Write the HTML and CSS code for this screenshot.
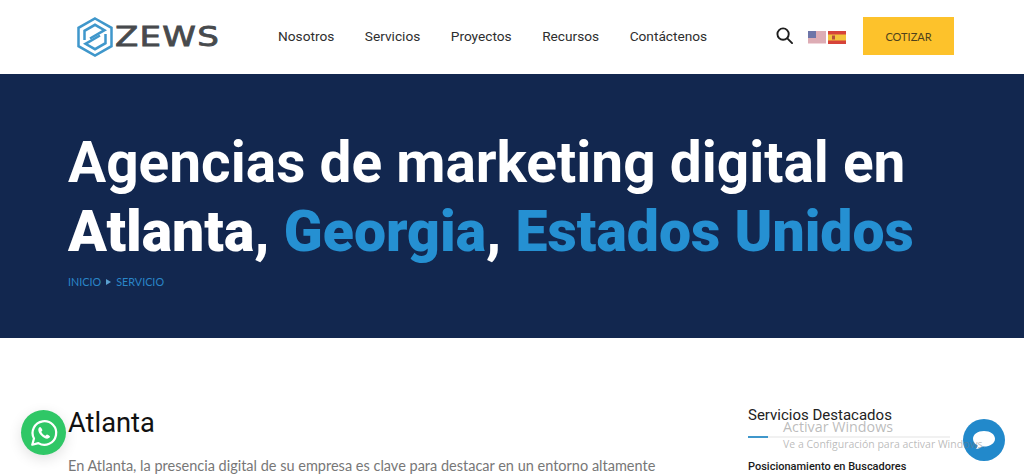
FILE: index.html
```html
<!DOCTYPE html>
<html lang="es">
<head>
<meta charset="utf-8">
<title>Agencias de marketing digital en Atlanta</title>
<link rel="stylesheet" href="styles.css">
</head>
<body>
<header class="site-header">
  <a class="logo" href="#">
    <svg class="logo-mark" viewBox="0 0 36 40" width="36" height="40" fill="none" stroke="#3f97cb" stroke-width="2.500" stroke-linejoin="miter">
      <path d="M18 1.500 34.500 10.800V29.200L18 38.500 1.500 29.200V10.800z"/>
      <path d="M7.500 23V13.800L18 7.800l9.500 5.400L13 21.500"/>
      <path d="M28.500 17V26.200L18 32.200 8.500 26.800 23 18.500"/>
    </svg>
    <span class="logo-text">ZEWS</span>
  </a>
  <nav class="main-nav">
    <a href="#">Nosotros</a>
    <a href="#">Servicios</a>
    <a href="#">Proyectos</a>
    <a href="#">Recursos</a>
    <a href="#">Contáctenos</a>
  </nav>
  <svg class="search" viewBox="0 0 18 18" width="17" height="17" fill="none" stroke="#1d1d1d" stroke-width="2">
    <circle cx="7.500" cy="7.500" r="6"/>
    <path d="M12 12l5 5" stroke-linecap="round"/>
  </svg>
  <div class="flags">
    <svg viewBox="0 0 18 13" width="18" height="13">
      <rect width="18" height="13" fill="#f1d5da"/>
      <path d="M0 1h18M0 3h18M0 5h18M0 7h18M0 9h18M0 11h18" stroke="#c9848f" stroke-width="1"/>
      <rect width="8" height="7" fill="#6d75a8"/>
    </svg>
    <svg viewBox="0 0 18 13" width="18" height="13">
      <rect width="18" height="13" fill="#d6433a"/>
      <rect y="3.500" width="18" height="6" fill="#f3c33c"/>
      <rect x="4" y="4.500" width="3" height="4" fill="#b5503a"/>
    </svg>
  </div>
  <a class="cta" href="#">COTIZAR</a>
</header>

<section class="hero">
  <h1>Agencias de marketing digital en<br><strong>Atlanta, <span class="accent">Georgia</span>, <span class="accent">Estados Unidos</span></strong></h1>
  <div class="crumbs"><span>INICIO</span><i class="crumb-arrow"></i><span>SERVICIO</span></div>
</section>

<main class="content">
  <article class="article">
    <h2>Atlanta</h2>
    <p>En Atlanta, la presencia digital de su empresa es clave para destacar en un entorno altamente</p>
  </article>
  <aside class="sidebar">
    <h3>Servicios Destacados</h3>
    <div class="rule"></div>
    <a href="#">Posicionamiento en Buscadores</a>
  </aside>
</main>

<a class="whatsapp" href="#" aria-label="WhatsApp">
  <svg viewBox="0 0 32 32" width="30" height="30" fill="none">
    <path d="M3.500 28.500l1.800-6.600A12.600 12.600 0 1 1 10 26.800z" stroke="#fff" stroke-width="2.400" stroke-linejoin="round"/>
    <path d="M11.800 9.500c-.7 0-1.900 1.200-1.900 3 0 4 5.300 9.500 9.500 9.500 1.800 0 3-1.300 3-2.200 0-.8-2.700-2.200-3.200-2.200-.6 0-1 1.300-1.700 1.300-1.200 0-4.300-3-4.300-4.200 0-.7 1.100-1 1.100-1.700 0-.5-1.300-3.500-2.500-3.500z" fill="#fff"/>
  </svg>
</a>
<a class="chat" href="#" aria-label="Chat">
  <svg viewBox="0 0 26 24" width="26" height="24">
    <path d="M13 3C6.800 3 2 6.300 2 10.800c0 3 1.800 5.200 4.700 6.600-.2 1.500-1 2.900-2 3.600 2.500-.2 4.800-1.200 6.500-2.500.6.100 1.200.1 1.800.1 6.200 0 11-3.300 11-7.800S19.200 3 13 3z" fill="#fff"/>
  </svg>
</a>
<div class="watermark">
  <div class="wm-title">Activar Windows</div>
  <div class="wm-sub">Ve a Configuración para activar Windows.</div>
</div>
</body>
</html>
```
FILE: styles.css
```css
* { box-sizing: border-box; }
html, body { margin: 0; height: 474px; overflow: hidden; background: #fff; }
body { font-family: Roboto, "Liberation Sans", sans-serif; position: relative; }
a { text-decoration: none; color: inherit; }

.site-header { height: 74px; display: flex; align-items: center; padding: 0 70px 0 77px; background: #fff; }
.logo { display: flex; align-items: center; width: 141px; gap: 2px; }
.logo-mark { flex: none; }
.logo-text { font-family: "DejaVu Sans", sans-serif; font-size: 27px; letter-spacing: 1px; color: #474a4d; transform: scaleX(1.26); transform-origin: left center; -webkit-text-stroke: 0.8px #474a4d; margin-bottom: 1px; }

.main-nav { display: flex; gap: 30.500px; margin-left: 60px; margin-bottom: 3px; font-size: 13.700px; color: #2e2e2e; }
.search { margin-left: 69px; margin-bottom: 3px; flex: none; }
.flags { display: flex; gap: 2px; margin-left: 15px; }
.cta { margin-left: auto; margin-bottom: 2px; width: 91px; height: 38px; display: flex; align-items: center; justify-content: center; background: #fdc22b; font-family: "Lato", sans-serif; font-size: 11px; color: #4f421c; }

.hero { height: 264px; background: #12274f; padding: 54px 68px 0; }
.hero h1 { margin: 0; font-size: 56.800px; line-height: 69px; font-weight: 700; color: #fff; white-space: nowrap; }
.hero h1 strong { font-weight: 900; font-size: 57.100px; }
.accent { color: #2590d2; }
.crumbs { display: flex; align-items: center; gap: 5px; margin-top: 9px; font-family: "Lato", sans-serif; font-size: 10.800px; font-weight: 400; color: #2a86c8; }
.crumb-arrow { width: 0; height: 0; border-left: 5px solid #5aa0d0; border-top: 3px solid transparent; border-bottom: 3px solid transparent; }

.content { display: grid; grid-template-columns: 680px 1fr; padding: 70px 68px 0; }
.article h2 { margin: 0; font-size: 27.300px; line-height: 30px; font-weight: 400; color: #111; }
.article p { margin: 16px 0 0; font-family: "Lato", sans-serif; font-size: 14.500px; line-height: 24px; color: #777; }
.sidebar { margin-top: -2px; }
.sidebar h3 { margin: 0; font-size: 15px; line-height: 18px; font-weight: 400; color: #222; }
.rule { width: 202px; height: 2px; margin-top: 12px; background: linear-gradient(to right, #3f97cb 20px, #f1f1f1 20px); }
.sidebar a { display: block; margin-top: 22px; font-size: 11px; line-height: 14px; font-weight: 500; color: #1a1a1a; }

.whatsapp { position: absolute; left: 21px; top: 410px; width: 45px; height: 45px; border-radius: 50%; background: #2fc766; display: flex; align-items: center; justify-content: center; box-shadow: 0 4px 14px rgba(0,0,0,.12); }
.chat { position: absolute; left: 963px; top: 419px; width: 42px; height: 42px; border-radius: 50%; background: #2289cb; display: flex; align-items: center; justify-content: center; }
.watermark { position: absolute; left: 783px; top: 419px; font-family: "Open Sans", sans-serif; color: rgba(120,120,120,.5); pointer-events: none; }
.wm-title { font-size: 14.300px; line-height: 16px; }
.wm-sub { margin-top: 3px; font-size: 10.500px; line-height: 12px; white-space: nowrap; }
```
